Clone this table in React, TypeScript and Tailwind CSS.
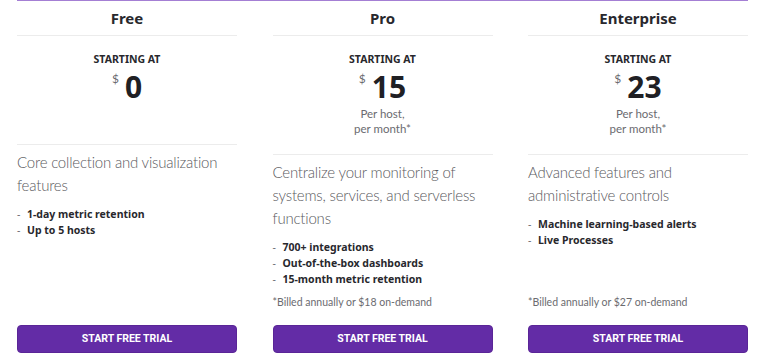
import React from "react";

type Plan = {
  name: string;
  price: string;
  perHost: boolean;
  desc: string;
  features: string[];
  billed?: string;
  pricePb: string;
};

const plans: Plan[] = [
  {
    name: "Free",
    price: "0",
    perHost: false,
    desc: "Core collection and visualization features",
    features: ["1-day metric retention", "Up to 5 hosts"],
    pricePb: "pb-[40px]",
  },
  {
    name: "Pro",
    price: "15",
    perHost: true,
    desc: "Centralize your monitoring of systems, services, and serverless functions",
    features: ["700+ integrations", "Out-of-the-box dashboards", "15-month metric retention"],
    billed: "*Billed annually or $18 on-demand",
    pricePb: "pb-[18px]",
  },
  {
    name: "Enterprise",
    price: "23",
    perHost: true,
    desc: "Advanced features and administrative controls",
    features: ["Machine learning-based alerts", "Live Processes"],
    billed: "*Billed annually or $27 on-demand",
    pricePb: "pb-[18px]",
  },
];

function Column({ p }: { p: Plan }) {
  return (
    <div className="flex h-[352px] flex-col">
      <div className="flex h-[35px] items-center justify-center border-b border-[#ececec] text-[15px] font-bold text-[#28282d]">
        {p.name}
      </div>
      <div className={`flex flex-col items-center border-b border-[#ececec] pt-[16px] ${p.pricePb}`}>
        <div className="text-[10.5px] font-bold uppercase leading-[15px] text-[#28282d]">Starting at</div>
        <div className="mt-[3px] flex items-start">
          <span className="mr-[6px] mt-[2px] font-['Lato',sans-serif] text-[12px] leading-[14px] text-[#6b6b70]">$</span>
          <span className="text-[30px] font-bold leading-[34px] text-[#202024]">{p.price}</span>
        </div>
        {p.perHost && (
          <div className="mt-[2px] text-center font-['Lato',sans-serif] text-[11.5px] leading-[15px] text-[#6b6b70]">
            <div>Per host,</div>
            <div>per month*</div>
          </div>
        )}
      </div>
      <div className="mt-[6px] font-['Lato',sans-serif] text-[15px] font-light leading-[23px] tracking-[-0.2px] text-[#5a5a60]">
        {p.desc}
      </div>
      <ul className="mt-[9px] text-[10.5px] leading-[16px]">
        {p.features.map((f) => (
          <li key={f} className="flex text-[#28282d]">
            <span className="w-[10px] text-[#6b6b70]">-</span>
            <span className="font-bold">{f}</span>
          </li>
        ))}
      </ul>
      <div className="mt-auto">
        {p.billed && (
          <div className="mb-[15px] font-['Lato',sans-serif] text-[10.5px] leading-[15px] text-[#6b6b70]">{p.billed}</div>
        )}
        <button className="flex h-[28px] w-full items-center justify-center rounded-[4px] border border-[#5a2597] bg-[#632ca6] font-['Roboto',sans-serif] text-[10.5px] font-bold uppercase text-white">
          Start free trial
        </button>
      </div>
    </div>
  );
}

export default function App() {
  return (
    <div className="h-[362px] w-[760px] bg-white pl-[17px] font-['Noto_Sans',sans-serif]">
      <div className="w-[731px] border-t border-[#a47fd4]">
        <div className="grid grid-cols-[220px_220px_220px] gap-x-[35.5px]">
          {plans.map((p) => (
            <Column key={p.name} p={p} />
          ))}
        </div>
      </div>
    </div>
  );
}
